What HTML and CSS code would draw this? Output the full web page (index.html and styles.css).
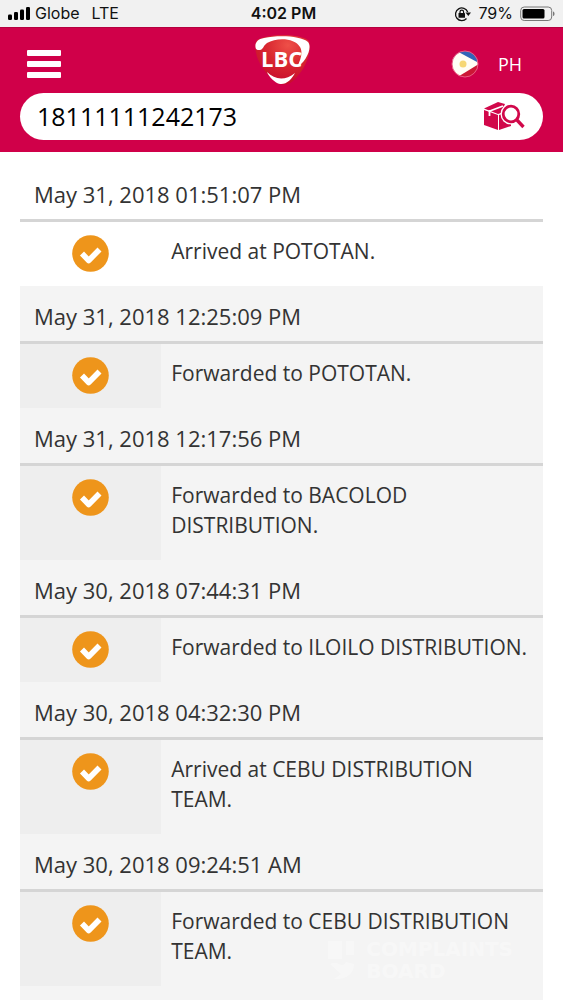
FILE: index.html
```html
<!DOCTYPE html>
<html lang="en">
<head>
<meta charset="utf-8">
<meta name="viewport" content="width=device-width, initial-scale=1">
<title>LBC Tracking</title>
<link rel="stylesheet" href="styles.css">
</head>
<body>
<svg width="0" height="0" class="defs" aria-hidden="true">
  <symbol id="check" viewBox="0 0 37 37">
    <circle cx="18.5" cy="18.5" r="18.3" fill="#ee951b"/>
    <path d="M10 18.5l6.700 7L27.500 14.500" fill="none" stroke="#fff" stroke-width="5.600" stroke-linejoin="round"/>
  </symbol>
</svg>
<div class="status">
  <div class="carrier">
    <svg width="23" height="15" viewBox="0 0 23 15" aria-hidden="true"><g fill="#000"><rect x="0" y="8.500" width="4" height="5.500" rx="1.200"/><rect x="6" y="6" width="4" height="8" rx="1.200"/><rect x="12" y="3.500" width="4" height="10.500" rx="1.200"/><rect x="18" y="1" width="4" height="13" rx="1.200"/></g></svg>
    <span class="network">Globe</span><span>LTE</span>
  </div>
  <div class="clock">4:02 PM</div>
  <div class="power">
    <svg width="17" height="16" viewBox="0 0 17 16" aria-hidden="true"><path d="M13.700 6A6.300 6.300 0 1 0 12.500 12.500" fill="none" stroke="#111" stroke-width="1.300"/><path d="M11.500 6.500h5.500l-2.700 3.400z" fill="#111"/><rect x="4.500" y="7" width="6.500" height="4.800" rx=".6" fill="#111"/><path d="M6 7.500V6a1.800 1.800 0 0 1 3.600 0v1.500" fill="none" stroke="#111" stroke-width="1.200"/></svg>
    <span>79%</span>
    <svg width="35" height="16" viewBox="0 0 35 16" aria-hidden="true"><rect x=".7" y="1" width="31" height="13.500" rx="3.500" fill="none" stroke="#777"/><rect x="2.500" y="3" width="22" height="9.600" rx="1.500" fill="#000"/><path d="M33 5.500c2 .5 2 4 0 4.500z" fill="#777"/></svg>
  </div>
</div>
<header class="header">
  <div class="nav">
    <button class="menu" aria-label="Menu"><span></span><span></span><span></span></button>
    <a class="logo" href="#" aria-label="LBC home">
      <svg width="60" height="54" viewBox="0 0 60 54">
        <defs><radialGradient id="ball" cx=".6" cy=".2" r=".8"><stop offset="0" stop-color="#ee5048"/><stop offset=".5" stop-color="#d82730"/><stop offset="1" stop-color="#c60b2c"/></radialGradient></defs>
        <path d="M4 8C12 1 48 0 57 8c3 10-3 28-15 39-6 6-14 6-20 0C9 37 1 21 4 8z" fill="url(#ball)"/>
        <path d="M4 16C2 11 5 6 12 5 27 2 49 3 56 9c5 6-3 21-11 25 4-8 6-15 3-20C43 5 25 4 15 10c-4 3-4 7-7 7-2 0-3 0-4-1z" fill="#fff"/>
        <path d="M15 39c8 8 18 9 28 1-3 6-9 12-15 11-5-1-11-7-13-12z" fill="#fff"/>
        <text x="9" y="34" class="logo-text" fill="#fff">LBC</text>
      </svg>
    </a>
    <button class="country">
      <svg width="28" height="28" viewBox="0 0 28 28" aria-hidden="true">
        <defs><clipPath id="round"><circle cx="14" cy="14" r="13"/></clipPath></defs>
        <g clip-path="url(#round)"><path d="M0 0h28v14H0z" fill="#3264b8"/><path d="M0 14h28v14H0z" fill="#cb1735"/><path d="M0-2 28 13v1L5 28H0z" fill="#fffdf5"/><circle cx="12" cy="14" r="3.500" fill="#f6d774"/></g>
        <circle cx="14" cy="14" r="13" fill="none" stroke="#ec5c85"/>
      </svg>
      <span>PH</span>
    </button>
  </div>
  <form class="search">
    <input type="text" value="18111111242173" aria-label="Tracking number">
    <button type="button" class="find" aria-label="Track">
      <svg width="42" height="32" viewBox="0 0 42 32">
        <g fill="#d1084a"><path d="M1 9l14 5v15L1 24z"/><path d="M16 14L28 10v15l-12 4z"/><path d="M1 7.500L15 1l7 2-4 9-3 1z"/></g>
        <path d="M5.500 10.500L20 5M6.500 9v6" fill="none" stroke="#fff" stroke-width="1.800"/>
        <circle cx="28" cy="13" r="10.500" fill="#fff"/><circle cx="28" cy="13" r="7.800" fill="none" stroke="#d1084a" stroke-width="2.800"/>
        <path d="M33.500 18.500l7 7.500" stroke="#d1084a" stroke-width="3.300"/>
      </svg>
    </button>
  </form>
</header>
<main class="history">
  <section class="event latest"><h2>May 31, 2018 01:51:07 PM</h2><div class="detail"><div class="mark"><svg><use href="#check"/></svg></div><p>Arrived at POTOTAN.</p></div></section>
  <section class="event"><h2>May 31, 2018 12:25:09 PM</h2><div class="detail"><div class="mark"><svg><use href="#check"/></svg></div><p>Forwarded to POTOTAN.</p></div></section>
  <section class="event"><h2>May 31, 2018 12:17:56 PM</h2><div class="detail"><div class="mark"><svg><use href="#check"/></svg></div><p>Forwarded to BACOLOD DISTRIBUTION.</p></div></section>
  <section class="event"><h2>May 30, 2018 07:44:31 PM</h2><div class="detail"><div class="mark"><svg><use href="#check"/></svg></div><p>Forwarded to ILOILO DISTRIBUTION.</p></div></section>
  <section class="event"><h2>May 30, 2018 04:32:30 PM</h2><div class="detail"><div class="mark"><svg><use href="#check"/></svg></div><p>Arrived at CEBU DISTRIBUTION TEAM.</p></div></section>
  <section class="event last"><h2>May 30, 2018 09:24:51 AM</h2><div class="detail"><div class="mark"><svg><use href="#check"/></svg></div><p>Forwarded to CEBU DISTRIBUTION TEAM.</p></div></section>
  <div class="watermark">
    <svg width="32" height="44" viewBox="0 0 32 44" aria-hidden="true"><path d="M2 3h14v18H2zM20 3h8v14h-8zM4 26c8-5 12 6 16-2l8 2c0 10-8 16-20 15l7-5z" fill="#fff"/></svg>
    <span>COMPLAINTS<br>BOARD</span>
  </div>
</main>
</body>
</html>
```
FILE: styles.css
```css
* { box-sizing: border-box; }
body { margin: 0; background: #fff; color: #333; font-family: "Open Sans", "Noto Sans", sans-serif; }
button { border: 0; padding: 0; background: none; color: inherit; font: inherit; }
svg { display: block; }
.defs { position: absolute; }
.status { display: grid; grid-template-columns: 1fr auto 1fr; align-items: center; height: 27px; padding: 0 8px; background: #f1f1f1; color: #111; font: 16px/27px Inter, sans-serif; }
.carrier, .power { display: flex; align-items: center; }
.carrier { gap: 4px; }
.network { margin-right: 8px; }
.clock { padding-left: 4px; font-weight: 600; }
.power { justify-content: flex-end; gap: 7px; }
.header { padding: 0 20px 12px; background: #d00049; border-top: 1px solid #b5003f; }
.nav { display: grid; grid-template-columns: 1fr auto 1fr; align-items: center; height: 65px; padding: 6px 7px 0; }
.menu { display: grid; gap: 5px; width: 34px; }
.menu span { height: 6px; border-radius: 1px; background: #fff; }
.logo { margin-top: -8px; }
.logo-text { font: bold 22px "Open Sans", sans-serif; }
.country { display: flex; align-items: center; justify-content: flex-end; gap: 19px; padding-right: 14px; color: #fff; font-size: 18px; }
.search { display: flex; align-items: center; height: 47px; padding: 0 18px 0 17px; border-radius: 24px; background: #fff; }
.search input { flex: 1; min-width: 0; border: 0; padding: 0 0 2px; outline: 0; background: none; color: #000; font: 25px "Open Sans", sans-serif; }
.history { position: relative; padding: 12px 20px 0; }
.event { background: #f4f4f4; }
.latest { background: #fff; }
.last { padding-bottom: 14px; }
.event h2 { margin: 0; padding: 15px 14px 10px; border-bottom: 3px solid #d5d5d5; font-size: 22px; line-height: 30px; font-weight: 400; }
.detail { display: grid; grid-template-columns: 27% 1fr; }
.mark { padding-top: 13px; background: #eee; }
.mark svg { width: 37px; height: 37px; margin: 0 auto; }
.latest .mark { background: #fff; }
.detail p { margin: 0; padding: 14px 10px 20px; font-size: 21px; line-height: 30px; }
.watermark { position: absolute; right: 50px; bottom: 18px; display: flex; gap: 8px; opacity: .35; color: #fff; font: bold 20px/22px "DejaVu Sans", sans-serif; }
```
